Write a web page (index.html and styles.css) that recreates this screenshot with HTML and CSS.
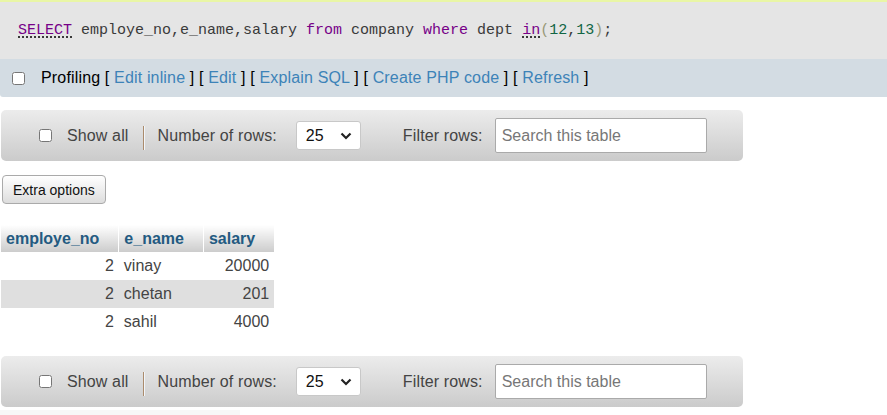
FILE: index.html
```html
<!DOCTYPE html>
<html>
<head>
<meta charset="utf-8">
<title>SQL result</title>
<link rel="stylesheet" href="styles.css">
</head>
<body>
<div class="notice-edge"></div>
<div class="sql-box">
  <div class="sql-code"><span class="kw ul">SELECT</span> employe_no,e_name,salary <span class="kw">from</span> company <span class="kw">where</span> dept <span class="kw ul">in</span><span class="br">(</span><span class="num">12</span>,<span class="num">13</span><span class="br">)</span>;</div>
  <div class="sql-tools">
    <input type="checkbox" class="chk">
    <span class="tools-text">Profiling [ <a class="lnk">Edit inline</a> ] [ <a class="lnk">Edit</a> ] [ <a class="lnk">Explain SQL</a> ] [ <a class="lnk">Create PHP code</a> ] [ <a class="lnk">Refresh</a> ]</span>
  </div>
</div>

<div class="navbar first">
  <input type="checkbox" class="chk">
  <span class="nav-label show-all">Show all</span>
  <span class="sep"></span>
  <span class="nav-label rows-label">Number of rows:</span>
  <div class="select"><span>25</span><svg width="12" height="8" viewBox="0 0 12 8"><polyline points="1.5,1.5 6,6 10.5,1.5" fill="none" stroke="#222" stroke-width="2.2"/></svg></div>
  <span class="nav-label filter-label">Filter rows:</span>
  <input type="text" class="search" placeholder="Search this table">
</div>

<button class="extra">Extra options</button>

<table class="results">
  <thead>
    <tr><th>employe_no</th><th>e_name</th><th>salary</th></tr>
  </thead>
  <tbody>
    <tr><td class="r">2</td><td>vinay</td><td class="r">20000</td></tr>
    <tr class="odd"><td class="r">2</td><td>chetan</td><td class="r">201</td></tr>
    <tr><td class="r">2</td><td>sahil</td><td class="r">4000</td></tr>
  </tbody>
</table>

<div class="navbar second">
  <input type="checkbox" class="chk">
  <span class="nav-label show-all">Show all</span>
  <span class="sep"></span>
  <span class="nav-label rows-label">Number of rows:</span>
  <div class="select"><span>25</span><svg width="12" height="8" viewBox="0 0 12 8"><polyline points="1.5,1.5 6,6 10.5,1.5" fill="none" stroke="#222" stroke-width="2.2"/></svg></div>
  <span class="nav-label filter-label">Filter rows:</span>
  <input type="text" class="search" placeholder="Search this table">
</div>
<div class="next-edge"></div>
</body>
</html>
```

FILE: styles.css
```css
* { box-sizing: border-box; }
html, body { margin: 0; padding: 0; background: #fff; }
body {
  font-family: "Liberation Sans", Arial, sans-serif;
  font-size: 16px;
  color: #444;
  overflow: hidden;
}
.notice-edge { height: 2px; background: #e9f6a6; }
.sql-code {
  background: #e5e5e5;
  height: 57px;
  padding-left: 18px;
  display: flex;
  align-items: center;
  font-family: "Liberation Mono", "DejaVu Sans Mono", monospace;
  font-size: 15px;
  color: #3a3a3a;
  white-space: pre;
}
.kw { color: #770088; }
.ul { text-decoration: underline dotted #000; text-underline-offset: 3px; }
.br { color: #999977; }
.num { color: #116644; }
.sql-tools {
  background: #d3dce3;
  height: 38px;
  display: flex;
  align-items: center;
  padding-left: 12px;
  color: #000;
  border-bottom-left-radius: 3px;
}
.chk { margin: 0; width: 13px; height: 13px; }
.tools-text { margin-left: 16px; white-space: pre; letter-spacing: 0.16px; }
.lnk { color: #3d83b8; text-decoration: none; }

.navbar {
  margin-left: 1px;
  width: 742px;
  height: 51px;
  border-radius: 5px;
  background: linear-gradient(#ececec, #cbcbcb);
  display: flex;
  align-items: center;
  padding-left: 38px;
  color: #444;
}
.navbar.first { margin-top: 13px; }
.navbar.second { margin-top: 20px; }
.nav-label { white-space: nowrap; letter-spacing: 0.13px; }
.show-all { margin-left: 15px; }
.sep {
  margin-left: 14px;
  margin-top: 5px;
  width: 2px;
  height: 24px;
  border-left: 1px solid #ab8b6c;
  border-right: 1px solid #f2f6fa;
}
.rows-label { margin-left: 13px; }
.select {
  margin-left: 19px;
  width: 65px;
  height: 29px;
  background: #fff;
  border: 1px solid #c8c8c8;
  border-radius: 3px;
  display: flex;
  align-items: center;
  justify-content: space-between;
  padding: 0 8px 0 9px;
  color: #111;
}
.filter-label { margin-left: 42px; }
.search {
  margin: 0 0 0 12px;
  width: 212px;
  height: 35px;
  border: 1px solid #aaa;
  border-radius: 2px;
  padding: 0 6px;
  font-family: "Liberation Sans", Arial, sans-serif;
  font-size: 16px;
  color: #444;
  background: #fff;
}
.search::placeholder { color: #777; }

.extra {
  display: block;
  margin: 14px 0 0 2px;
  height: 29px;
  padding: 0 10px;
  font-family: "Liberation Sans", Arial, sans-serif;
  font-size: 14px;
  color: #111;
  border: 1px solid #aaa;
  border-radius: 4px;
  background: linear-gradient(#ffffff, #dddddd);
}

.results {
  margin: 21px 0 0 1px;
  border-collapse: collapse;
  color: #444;
}
.results th {
  height: 27px;
  padding: 0 19px 0 5px;
  text-align: left;
  font-weight: bold;
  color: #235a81;
  background: linear-gradient(#ffffff, #cccccc);
  border-right: 1px solid #fff;
}
.results th:last-child { border-right: 0; }
.results td {
  height: 28px;
  padding: 0 5px;
  text-align: left;
}
.results td.r { text-align: right; }
.results tr.odd td { background: #dfdfdf; }

.next-edge {
  margin-top: 3px;
  width: 240px;
  height: 10px;
  background: #f7f7f7;
}
```
